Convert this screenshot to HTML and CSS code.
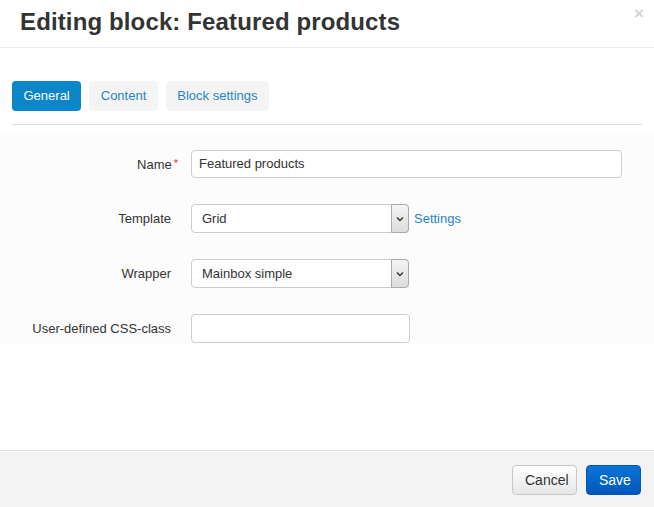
FILE: index.html
```html
<!DOCTYPE html>
<html>
<head>
<meta charset="utf-8">
<link rel="stylesheet" href="styles.css">
</head>
<body>
<div class="modal">
  <div class="modal-header">
    <h3 class="title">Editing block: Featured products</h3>
    <span class="close">&times;</span>
  </div>
  <div class="modal-body">
    <div class="tabs">
      <span class="tab active">General</span>
      <span class="tab">Content</span>
      <span class="tab">Block settings</span>
    </div>
    <div class="form">
      <div class="row first">
        <label class="label">Name<span class="req">*</span></label>
        <div class="input wide">Featured products</div>
      </div>
      <div class="row">
        <label class="label">Template</label>
        <div class="select"><span class="value">Grid</span><span class="arrow"><svg width="8" height="6" viewBox="0 0 8 6"><polyline points="1,1.5 4,4.5 7,1.5" fill="none" stroke="#333" stroke-width="1.4"/></svg></span></div>
        <a class="link">Settings</a>
      </div>
      <div class="row">
        <label class="label">Wrapper</label>
        <div class="select"><span class="value">Mainbox simple</span><span class="arrow"><svg width="8" height="6" viewBox="0 0 8 6"><polyline points="1,1.5 4,4.5 7,1.5" fill="none" stroke="#333" stroke-width="1.4"/></svg></span></div>
      </div>
      <div class="row">
        <label class="label">User-defined CSS-class</label>
        <div class="input short"></div>
      </div>
    </div>
  </div>
  <div class="modal-footer">
    <button class="btn cancel">Cancel</button>
    <button class="btn save">Save</button>
  </div>
</div>
</body>
</html>
```
FILE: styles.css
```css
* { box-sizing: border-box; }
html, body { margin: 0; padding: 0; background: #fff; }
body { font-family: "Liberation Sans", Arial, sans-serif; font-size: 13px; color: #333; }
.modal { width: 654px; height: 507px; display: flex; flex-direction: column; position: relative; }
.modal-header { height: 48px; padding: 8px 20px 0; border-bottom: 1px solid #ececec; }
.title { margin: 0; font-size: 24px; line-height: 27px; font-weight: bold; color: #333; letter-spacing: 0.13px; }
.close { position: absolute; right: 10px; top: 4px; font-size: 17px; font-weight: bold; color: #d4d4d4; line-height: 20px; }
.modal-body { flex: 1; padding: 33px 12px 0; }
.tabs { display: flex; gap: 8px; padding-bottom: 13px; border-bottom: 1px solid #dcdcdc; }
.tab { height: 30px; line-height: 30px; padding: 0 11.5px; border-radius: 4px; background: #f4f4f4; color: #1f84c9; }
.tab.active { background: #0b86c8; color: #fff; }
.form { margin: 8px -12px 0; padding: 17px 12px 2px; background: linear-gradient(#fcfcfc, #fcfcfc 94%, #fdfdfd); }
.row { display: flex; align-items: center; margin-top: 26px; }
.row.first { margin-top: 0; }
.label { width: 159px; margin-right: 20px; text-align: right; color: #333; }
.req { color: #e0434a; margin-left: 2px; margin-right: -7px; font-size: 11px; vertical-align: top; }
.input { height: 29px; border: 1px solid #ccc; border-radius: 4px; background: #fff; padding: 0 7px; line-height: 27px; color: #333; }
.input.wide { width: 431px; height: 28px; line-height: 26px; }
.input.short { width: 219px; }
.select { width: 218px; height: 29px; border: 1px solid #ccc; border-radius: 4px; background: #fff; display: flex; line-height: 27px; }
.value { flex: 1; padding-left: 10px; }
.arrow { width: 18px; margin: -1px -1px -1px 0; border: 1px solid #aaa; border-radius: 0 4px 4px 0; background: linear-gradient(#f4f4f4, #dcdcdc); display: flex; align-items: center; justify-content: center; }
.link { margin-left: 5px; color: #1f84c9; }
.modal-footer { height: 57px; border-top: 1px solid #e3e3e3; box-shadow: inset 0 1px 0 #fff; background: #f3f3f3; display: flex; justify-content: flex-end; align-items: flex-start; padding: 14px 13px 0 0; gap: 9px; }
.btn { font-family: "Liberation Sans", Arial, sans-serif; font-size: 14px; height: 30px; border-radius: 4px; padding: 0 12px; }
.cancel { width: 65px; border: 1px solid #c8c8c8; background: linear-gradient(#ffffff, #e6e6e6); color: #333; }
.save { width: 55px; border: 1px solid #0456b3; background: linear-gradient(#0a74d6, #0057bb); color: #fff; }
```
